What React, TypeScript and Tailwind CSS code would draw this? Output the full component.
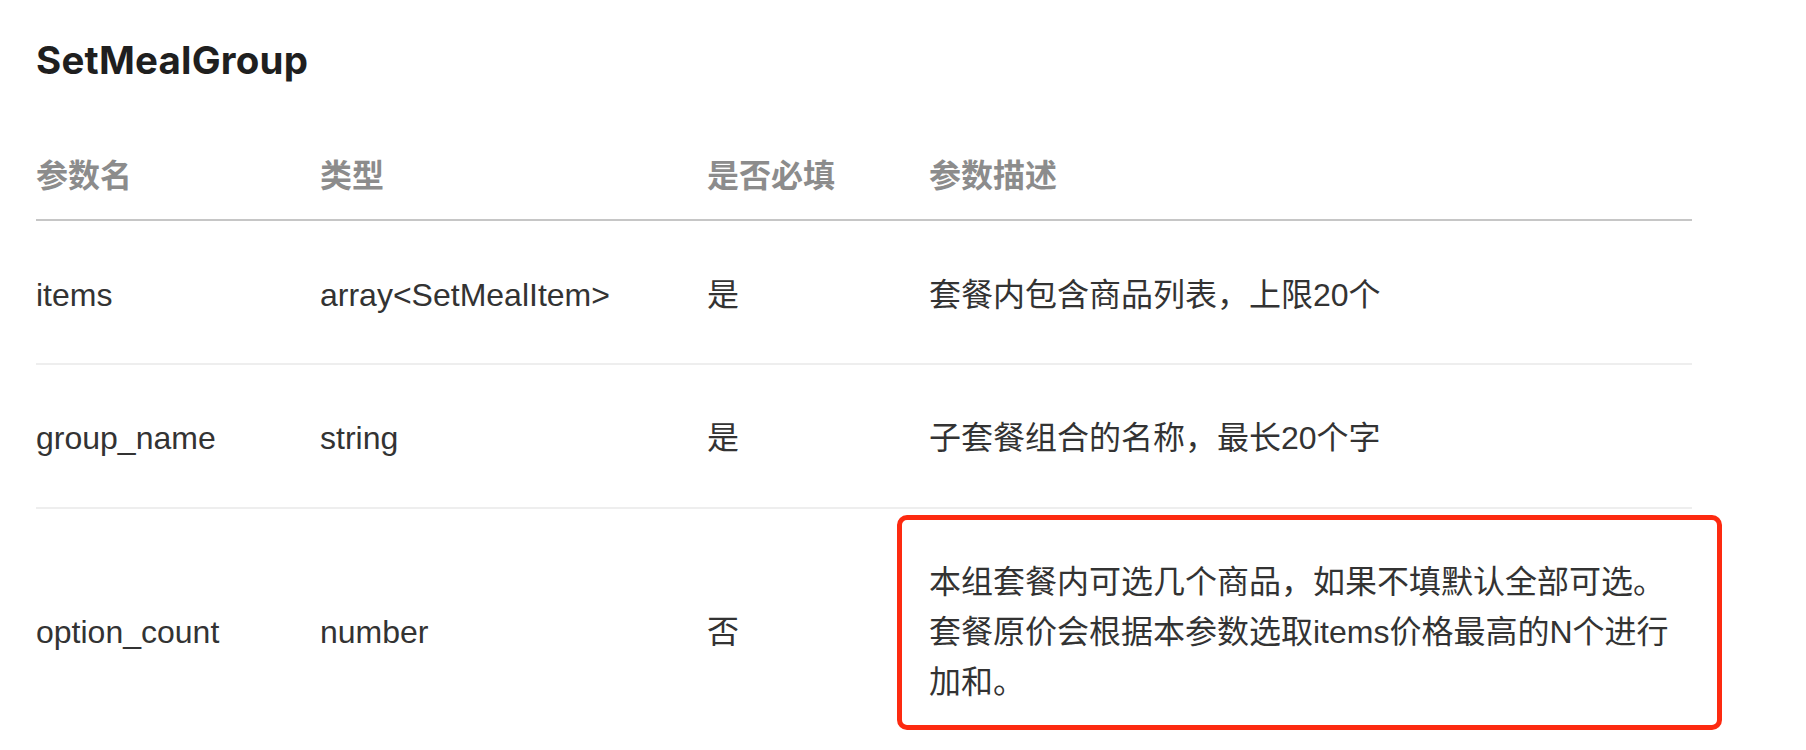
import React from "react";

const rows = [
  { name: "items", type: "array<SetMealItem>", req: "是", desc: ["套餐内包含商品列表，上限20个"], pad: "pt-[49px] pb-[43px]" },
  { name: "group_name", type: "string", req: "是", desc: ["子套餐组合的名称，最长20个字"], pad: "pt-[48px] pb-[44px]" },
  {
    name: "option_count",
    type: "number",
    req: "否",
    desc: [
      "本组套餐内可选几个商品，如果不填默认全部可选。",
      "套餐原价会根据本参数选取items价格最高的N个进行",
      "加和。",
    ],
    pad: "pt-[48px] pb-[44px]",
  },
];

export default function App() {
  return (
    <div
      className="relative w-[1806px] h-[750px] overflow-hidden bg-white"
      style={{ fontFamily: '"Liberation Sans", "Noto Sans CJK SC", sans-serif' }}
    >
      <div className="pl-[36px] pt-[41px]">
        <h2 className="m-0 text-[38.5px] leading-[38px] font-bold text-[#1f1f1f] mb-[72px] font-['Inter','Noto_Sans_CJK_SC',sans-serif] tracking-[0.2px]">
          SetMealGroup
        </h2>
        <div className="w-[1656px]">
          <div className="grid grid-cols-[284px_387px_222px_763px] border-b-2 border-[#c6c6c6] pb-[18px] text-[32px] leading-[50px] font-semibold text-[#8c8c8c]">
            <div>参数名</div>
            <div>类型</div>
            <div>是否必填</div>
            <div>参数描述</div>
          </div>
          {rows.map((r) => (
            <div
              key={r.name}
              className={`grid grid-cols-[284px_387px_222px_763px] border-b-2 border-[#eeeeee] ${r.pad} text-[32px] leading-[50px] text-[#333333] items-center`}
            >
              <div>{r.name}</div>
              <div>{r.type}</div>
              <div>{r.req}</div>
              <div>
                {r.desc.map((d, i) => (
                  <div key={i} className="whitespace-nowrap">
                    {d}
                  </div>
                ))}
              </div>
            </div>
          ))}
        </div>
      </div>
      <div className="absolute left-[897px] top-[515px] w-[825px] h-[215px] border-[5px] border-[#fd2a10] rounded-[10px]" />
    </div>
  );
}
